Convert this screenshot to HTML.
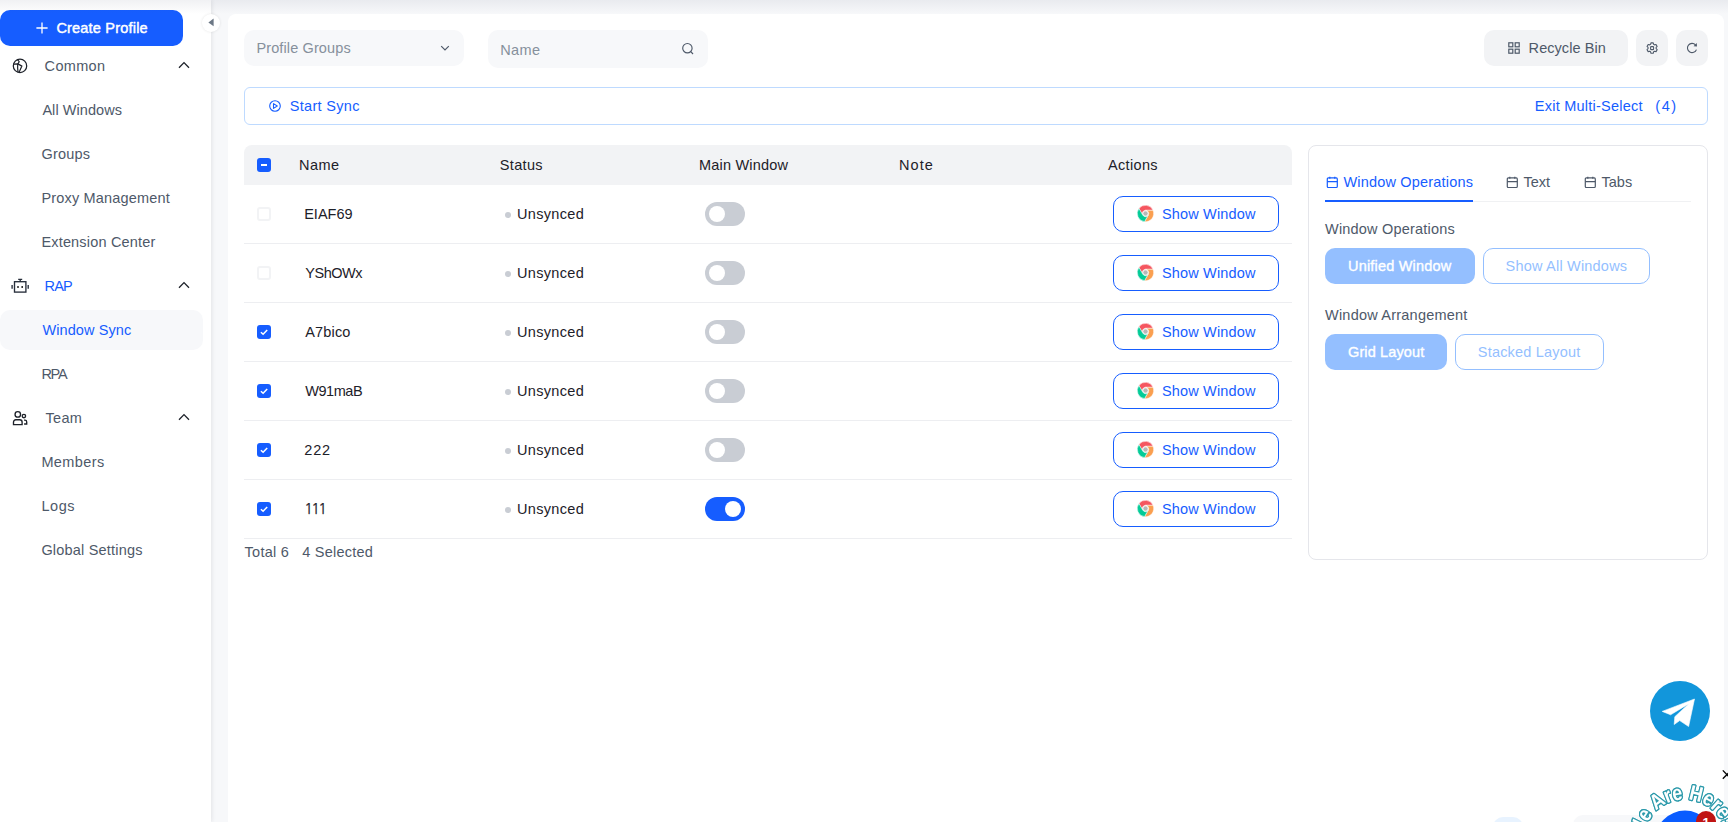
<!DOCTYPE html>
<html lang="en"><head><meta charset="utf-8"><title>Window Sync</title>
<style>
*{box-sizing:border-box;margin:0;padding:0}
html,body{width:1728px;height:822px;overflow:hidden;background:#f7f8fa}
body{position:relative;font-family:"Liberation Sans",sans-serif;font-size:14.5px;color:#1d2129}
.t{position:absolute;white-space:nowrap;line-height:20px;height:20px;display:block}
.ic{position:absolute;display:block;overflow:visible}
.abs{position:absolute;display:block}
aside{position:absolute;left:0;top:0;width:211px;height:822px;background:#fff;box-shadow:1px 0 4px rgba(20,20,30,.085)}
main{position:absolute;left:228px;top:14px;width:1496px;height:830px;background:#fff;border-radius:8px 8px 0 0}
.topshade{position:absolute;left:0;top:0;width:1728px;height:14px;background:linear-gradient(to bottom,rgba(60,70,100,.075),rgba(60,70,100,0));z-index:50;pointer-events:none}
.create{position:absolute;left:0;top:10px;width:183px;height:36px;border-radius:10px;background:#165dff}
.sel{position:absolute;left:0;top:310px;width:203px;height:40px;border-radius:10px;background:#f7f8fa}
.collapse{position:absolute;left:201.5px;top:13.8px;width:18px;height:18px;border-radius:50%;background:#fff;box-shadow:0 0 3px rgba(0,0,0,.10);z-index:5}
.field{position:absolute;background:#f7f8fa;border-radius:10px}
.gbtn{position:absolute;background:#f2f3f5;border-radius:10px}
.syncbar{position:absolute;left:244px;top:87px;width:1464px;height:38px;border:1px solid #bedaff;border-radius:6px;background:#fff}
.thead{position:absolute;left:244px;top:145px;width:1048px;height:40px;background:#f2f3f5;border-radius:8px 8px 0 0}
.rowline{position:absolute;left:244px;width:1048px;height:1px;background:#edeef1}
.cb{position:absolute;width:14px;height:14px;border-radius:3px;display:block}
.cb.off{border:2px solid #f2f3f5;background:#fff}
.cb.on{background:#165dff}
.cb svg{display:block}
.minus{position:absolute;left:4px;top:6px;width:6px;height:2px;background:#fff;display:block}
.dot{position:absolute;width:6px;height:6px;border-radius:50%;background:#c9cdd4}
.sw{position:absolute;width:40px;height:24px;border-radius:12px;background:#c9cdd4}
.sw b{position:absolute;left:4px;top:4px;width:16px;height:16px;border-radius:50%;background:#fff;display:block}
.sw.on{background:#165dff}.sw.on b{left:20px}
.obtn{position:absolute;border:1px solid #165dff;border-radius:10px;background:#fff}
.panel{position:absolute;left:1308px;top:145px;width:400px;height:415px;border:1px solid #e5e6eb;border-radius:8px;background:#fff}
.pbtn{position:absolute;border-radius:10px;background:#94bfff}
.pobtn{position:absolute;border-radius:10px;border:1px solid #94bfff;background:#fff}
</style></head><body>

<aside></aside>
<nav>
<div class="create"></div>
<svg class="ic" style="left:36px;top:22px" width="12" height="12" viewBox="0 0 12 12"><path d="M6 0.4v11.2M0.4 6h11.2" stroke="#fff" stroke-width="1.3" fill="none"/></svg>
<span class="t" id="t0" style="left:56.4px;top:18.0px;color:#fff;letter-spacing:0.20px;-webkit-text-stroke:0.45px #fff;">Create Profile</span>
<svg class="ic" style="left:12px;top:58px" width="16" height="16" viewBox="0 0 16 16" fill="none" stroke="#1d2129" stroke-width="1.25" stroke-linejoin="round" stroke-linecap="round"><circle cx="8" cy="7.9" r="6.7"/><g stroke-width="1.2"><path d="M5.5 1.7 L7.2 3.7 L5.9 5.9"/><path d="M1.6 6.1 L5.9 5.9 L9.9 8.1 L7.2 13.9"/><path d="M5.7 6.6 C5.5 9 5.7 11.5 6.0 14.0"/></g></svg>
<span class="t" id="t1" style="left:44.6px;top:56.0px;color:#4e5969;letter-spacing:0.31px;">Common</span>
<svg class="ic" style="left:177px;top:58.3px" width="14" height="14" viewBox="0 0 14 14"><path d="M2 9.8 L7 4.6 L12 9.8" fill="none" stroke="#1d2129" stroke-width="1.3" stroke-linecap="butt" stroke-linejoin="miter"/></svg>
<span class="t" id="t2" style="left:42.4px;top:100.0px;color:#4e5969;letter-spacing:0.06px;">All Windows</span>
<span class="t" id="t3" style="left:41.4px;top:144.0px;color:#4e5969;letter-spacing:0.21px;">Groups</span>
<span class="t" id="t4" style="left:41.4px;top:188.0px;color:#4e5969;letter-spacing:0.18px;">Proxy Management</span>
<span class="t" id="t5" style="left:41.4px;top:232.0px;color:#4e5969;letter-spacing:0.18px;">Extension Center</span>
<svg class="ic" style="left:11px;top:278px" width="18" height="16" viewBox="0 0 18 16" fill="none" stroke="#272e3b" stroke-width="1.35"><rect x="3.5" y="3.7" width="11.4" height="10.4"/><path d="M7.2 1.4h4M9.2 1.4v2.3M1.1 7v3.8M17.2 7v3.8"/><rect x="6.2" y="8.2" width="1.6" height="1.6" fill="#000" stroke="none"/><rect x="10.4" y="8.2" width="1.6" height="1.6" fill="#000" stroke="none"/></svg>
<span class="t" id="t6" style="left:44.6px;top:276.0px;color:#165dff;letter-spacing:-0.91px;">RAP</span>
<svg class="ic" style="left:177px;top:278.3px" width="14" height="14" viewBox="0 0 14 14"><path d="M2 9.8 L7 4.6 L12 9.8" fill="none" stroke="#1d2129" stroke-width="1.3" stroke-linecap="butt" stroke-linejoin="miter"/></svg>
<div class="sel"></div>
<span class="t" id="t7" style="left:42.4px;top:320.0px;color:#165dff;letter-spacing:0.10px;">Window Sync</span>
<span class="t" id="t8" style="left:41.4px;top:364.0px;color:#4e5969;letter-spacing:-1.27px;">RPA</span>
<svg class="ic" style="left:12px;top:410px" width="17" height="16" viewBox="0 0 17 16" fill="none" stroke="#1d2129" stroke-width="1.35"><circle cx="5.8" cy="4.4" r="2.75"/><circle cx="11.9" cy="6.0" r="1.7"/><path d="M1.5 14.6v-2.6a2.3 2.3 0 0 1 2.3-2.3h4a2.3 2.3 0 0 1 2.3 2.3v2.6z"/><path d="M12 10.1h0.9a1.8 1.8 0 0 1 1.8 1.8v2.1h-2.6"/></svg>
<span class="t" id="t9" style="left:45.6px;top:408.0px;color:#4e5969;letter-spacing:0.24px;">Team</span>
<svg class="ic" style="left:177px;top:410.3px" width="14" height="14" viewBox="0 0 14 14"><path d="M2 9.8 L7 4.6 L12 9.8" fill="none" stroke="#1d2129" stroke-width="1.3" stroke-linecap="butt" stroke-linejoin="miter"/></svg>
<span class="t" id="t10" style="left:41.4px;top:452.0px;color:#4e5969;letter-spacing:0.39px;">Members</span>
<span class="t" id="t11" style="left:41.4px;top:496.0px;color:#4e5969;letter-spacing:0.58px;">Logs</span>
<span class="t" id="t12" style="left:41.4px;top:540.0px;color:#4e5969;letter-spacing:0.20px;">Global Settings</span>
</nav>
<div class="collapse"><svg class="ic" style="left:6px;top:4.5px" width="6" height="9" viewBox="0 0 6 9"><path d="M0.4 4.4L5.6 0.6v7.6z" fill="#6b7785"/></svg></div>
<main></main>
<section>
<div class="field" style="left:244px;top:30px;width:220px;height:36px"></div>
<span class="t" id="t13" style="left:256.4px;top:38.0px;color:#86909c;letter-spacing:0.12px;">Profile Groups</span>
<svg class="ic" style="left:440px;top:43px" width="10" height="10" viewBox="0 0 10 10"><path d="M1.2 3.2L5 7.0L8.8 3.2" fill="none" stroke="#4e5969" stroke-width="1.2"/></svg>
<div class="field" style="left:488px;top:30px;width:220px;height:38px"></div>
<span class="t" id="t14" style="left:500.2px;top:39.5px;color:#86909c;letter-spacing:0.37px;">Name</span>
<svg class="ic" style="left:681px;top:42px" width="14" height="14" viewBox="0 0 14 14" fill="none" stroke="#4e5969" stroke-width="1.15"><circle cx="6.4" cy="6.2" r="4.7"/><path d="M9.8 9.6L12 12"/></svg>
<div class="gbtn" style="left:1484px;top:30px;width:144px;height:36px"></div>
<svg class="ic" style="left:1508px;top:42px" width="12" height="12" viewBox="0 0 12 12" fill="none" stroke="#4e5969" stroke-width="1.2"><rect x="0.8" y="0.8" width="4" height="4"/><rect x="7.2" y="0.8" width="4" height="4"/><rect x="0.8" y="7.2" width="4" height="4"/><rect x="7.2" y="7.2" width="4" height="4"/></svg>
<span class="t" id="t15" style="left:1528.6px;top:38.0px;color:#4e5969;letter-spacing:0.06px;">Recycle Bin</span>
<div class="gbtn" style="left:1636px;top:30px;width:32px;height:36px"></div>
<svg class="ic" style="left:1645.8px;top:41.9px" width="12.2" height="12.2" viewBox="0 0 13 13" fill="none" stroke="#4e5969" stroke-width="1.15" stroke-linejoin="round"><path d="M5.3 0.9h2.4l0.45 1.55 1.0 0.6 1.55-0.4 1.2 2.05-1.1 1.15v1.2l1.1 1.15-1.2 2.05-1.55-0.4-1.0 0.6-0.45 1.55h-2.4l-0.45-1.55-1.0-0.6-1.55 0.4-1.2-2.05 1.1-1.15v-1.2l-1.1-1.15 1.2-2.05 1.55 0.4 1.0-0.6z"/><rect x="4.9" y="4.9" width="3.2" height="3.2" rx="0.7"/></svg>
<div class="gbtn" style="left:1676px;top:30px;width:32px;height:36px"></div>
<svg class="ic" style="left:1686px;top:42px" width="12" height="12" viewBox="0 0 13 13" fill="none" stroke="#4e5969" stroke-width="1.2"><path d="M11.3 8.2A5 5 0 1 1 10.3 3.2"/><path d="M8.2 4.6L11.9 4.9L11.6 1.2z" fill="#4e5969" stroke="none"/></svg>
<div class="syncbar"></div>
<svg class="ic" style="left:269px;top:100px" width="12" height="12" viewBox="0 0 12 12" fill="none" stroke="#165dff" stroke-width="1.1" stroke-linejoin="round"><circle cx="6" cy="6" r="5.3"/><path d="M4.5 3.6L8.3 6L4.5 8.4z"/></svg>
<span class="t" id="t16" style="left:289.8px;top:96.0px;color:#165dff;letter-spacing:0.30px;">Start Sync</span>
<span class="t" id="t17" style="left:1534.8px;top:96.0px;color:#165dff;letter-spacing:0.24px;">Exit Multi-Select</span>
<span class="t" id="t18" style="left:1655.2px;top:96.0px;color:#165dff;letter-spacing:1.63px;">(4)</span>
<div class="thead"></div>
<i class="cb on" style="left:257px;top:158px"><b class="minus"></b></i>
<span class="t" id="t19" style="left:299.0px;top:155.0px;color:#1d2129;letter-spacing:0.50px;">Name</span>
<span class="t" id="t20" style="left:499.8px;top:155.0px;color:#1d2129;letter-spacing:0.34px;">Status</span>
<span class="t" id="t21" style="left:699.0px;top:155.0px;color:#1d2129;letter-spacing:0.20px;">Main Window</span>
<span class="t" id="t22" style="left:899.0px;top:155.0px;color:#1d2129;letter-spacing:1.05px;">Note</span>
<span class="t" id="t23" style="left:1108.0px;top:155.0px;color:#1d2129;letter-spacing:0.34px;">Actions</span>
<i class="cb off" style="left:257px;top:207px"></i>
<span class="t" id="t24" style="left:304.2px;top:204.0px;color:#1d2129;letter-spacing:0.01px;">EIAF69</span>
<i class="dot" style="left:504.7px;top:211.6px"></i>
<span class="t" id="t25" style="left:517.0px;top:204.0px;color:#1d2129;letter-spacing:0.33px;">Unsynced</span>
<i class="sw" style="left:705px;top:202px"><b></b></i>
<div class="obtn" style="left:1113px;top:196px;width:166px;height:36px"></div>
<svg class="ic" style="left:1136.9px;top:205.1px" width="17" height="17" viewBox="0 0 17 17"><path d="M8.50 5.30 L16.05 5.30 A8.2 8.2 0 0 0 1.95 3.56 L5.73 10.10 A3.2 3.2 0 0 1 8.50 5.30 Z" fill="#f5565f" stroke="#fff" stroke-width="0.5"/><path d="M11.27 10.10 L7.50 16.64 A8.2 8.2 0 0 0 16.05 5.30 L8.50 5.30 A3.2 3.2 0 0 1 11.27 10.10 Z" fill="#fa9f50" stroke="#fff" stroke-width="0.5"/><path d="M5.73 10.10 L1.95 3.56 A8.2 8.2 0 0 0 7.50 16.64 L11.27 10.10 A3.2 3.2 0 0 1 5.73 10.10 Z" fill="#03cb97" stroke="#fff" stroke-width="0.5"/><circle cx="8.5" cy="8.5" r="2.25" fill="#b7b7b7"/></svg>
<span class="t" id="t26" style="left:1162.0px;top:204.0px;color:#165dff;letter-spacing:0.15px;">Show Window</span>
<div class="rowline" style="top:243px"></div>
<i class="cb off" style="left:257px;top:266px"></i>
<span class="t" id="t27" style="left:305.2px;top:263.0px;color:#1d2129;letter-spacing:-0.45px;">YShOWx</span>
<i class="dot" style="left:504.7px;top:270.6px"></i>
<span class="t" id="t28" style="left:517.0px;top:263.0px;color:#1d2129;letter-spacing:0.33px;">Unsynced</span>
<i class="sw" style="left:705px;top:261px"><b></b></i>
<div class="obtn" style="left:1113px;top:255px;width:166px;height:36px"></div>
<svg class="ic" style="left:1136.9px;top:264.1px" width="17" height="17" viewBox="0 0 17 17"><path d="M8.50 5.30 L16.05 5.30 A8.2 8.2 0 0 0 1.95 3.56 L5.73 10.10 A3.2 3.2 0 0 1 8.50 5.30 Z" fill="#f5565f" stroke="#fff" stroke-width="0.5"/><path d="M11.27 10.10 L7.50 16.64 A8.2 8.2 0 0 0 16.05 5.30 L8.50 5.30 A3.2 3.2 0 0 1 11.27 10.10 Z" fill="#fa9f50" stroke="#fff" stroke-width="0.5"/><path d="M5.73 10.10 L1.95 3.56 A8.2 8.2 0 0 0 7.50 16.64 L11.27 10.10 A3.2 3.2 0 0 1 5.73 10.10 Z" fill="#03cb97" stroke="#fff" stroke-width="0.5"/><circle cx="8.5" cy="8.5" r="2.25" fill="#b7b7b7"/></svg>
<span class="t" id="t29" style="left:1162.0px;top:263.0px;color:#165dff;letter-spacing:0.15px;">Show Window</span>
<div class="rowline" style="top:302px"></div>
<i class="cb on" style="left:257px;top:325px"><svg width="14" height="14" viewBox="0 0 14 14"><path d="M3.9 7.2 L6.1 9.3 L10.2 4.9" fill="none" stroke="#fff" stroke-width="1.5"/></svg></i>
<span class="t" id="t30" style="left:305.2px;top:322.0px;color:#1d2129;letter-spacing:0.17px;">A7bico</span>
<i class="dot" style="left:504.7px;top:329.6px"></i>
<span class="t" id="t31" style="left:517.0px;top:322.0px;color:#1d2129;letter-spacing:0.33px;">Unsynced</span>
<i class="sw" style="left:705px;top:320px"><b></b></i>
<div class="obtn" style="left:1113px;top:314px;width:166px;height:36px"></div>
<svg class="ic" style="left:1136.9px;top:323.1px" width="17" height="17" viewBox="0 0 17 17"><path d="M8.50 5.30 L16.05 5.30 A8.2 8.2 0 0 0 1.95 3.56 L5.73 10.10 A3.2 3.2 0 0 1 8.50 5.30 Z" fill="#f5565f" stroke="#fff" stroke-width="0.5"/><path d="M11.27 10.10 L7.50 16.64 A8.2 8.2 0 0 0 16.05 5.30 L8.50 5.30 A3.2 3.2 0 0 1 11.27 10.10 Z" fill="#fa9f50" stroke="#fff" stroke-width="0.5"/><path d="M5.73 10.10 L1.95 3.56 A8.2 8.2 0 0 0 7.50 16.64 L11.27 10.10 A3.2 3.2 0 0 1 5.73 10.10 Z" fill="#03cb97" stroke="#fff" stroke-width="0.5"/><circle cx="8.5" cy="8.5" r="2.25" fill="#b7b7b7"/></svg>
<span class="t" id="t32" style="left:1162.0px;top:322.0px;color:#165dff;letter-spacing:0.15px;">Show Window</span>
<div class="rowline" style="top:361px"></div>
<i class="cb on" style="left:257px;top:384px"><svg width="14" height="14" viewBox="0 0 14 14"><path d="M3.9 7.2 L6.1 9.3 L10.2 4.9" fill="none" stroke="#fff" stroke-width="1.5"/></svg></i>
<span class="t" id="t33" style="left:305.2px;top:381.0px;color:#1d2129;letter-spacing:-0.45px;">W91maB</span>
<i class="dot" style="left:504.7px;top:388.6px"></i>
<span class="t" id="t34" style="left:517.0px;top:381.0px;color:#1d2129;letter-spacing:0.33px;">Unsynced</span>
<i class="sw" style="left:705px;top:379px"><b></b></i>
<div class="obtn" style="left:1113px;top:373px;width:166px;height:36px"></div>
<svg class="ic" style="left:1136.9px;top:382.1px" width="17" height="17" viewBox="0 0 17 17"><path d="M8.50 5.30 L16.05 5.30 A8.2 8.2 0 0 0 1.95 3.56 L5.73 10.10 A3.2 3.2 0 0 1 8.50 5.30 Z" fill="#f5565f" stroke="#fff" stroke-width="0.5"/><path d="M11.27 10.10 L7.50 16.64 A8.2 8.2 0 0 0 16.05 5.30 L8.50 5.30 A3.2 3.2 0 0 1 11.27 10.10 Z" fill="#fa9f50" stroke="#fff" stroke-width="0.5"/><path d="M5.73 10.10 L1.95 3.56 A8.2 8.2 0 0 0 7.50 16.64 L11.27 10.10 A3.2 3.2 0 0 1 5.73 10.10 Z" fill="#03cb97" stroke="#fff" stroke-width="0.5"/><circle cx="8.5" cy="8.5" r="2.25" fill="#b7b7b7"/></svg>
<span class="t" id="t35" style="left:1162.0px;top:381.0px;color:#165dff;letter-spacing:0.15px;">Show Window</span>
<div class="rowline" style="top:420px"></div>
<i class="cb on" style="left:257px;top:443px"><svg width="14" height="14" viewBox="0 0 14 14"><path d="M3.9 7.2 L6.1 9.3 L10.2 4.9" fill="none" stroke="#fff" stroke-width="1.5"/></svg></i>
<span class="t" id="t36" style="left:304.2px;top:440.0px;color:#1d2129;letter-spacing:0.90px;">222</span>
<i class="dot" style="left:504.7px;top:447.6px"></i>
<span class="t" id="t37" style="left:517.0px;top:440.0px;color:#1d2129;letter-spacing:0.33px;">Unsynced</span>
<i class="sw" style="left:705px;top:438px"><b></b></i>
<div class="obtn" style="left:1113px;top:432px;width:166px;height:36px"></div>
<svg class="ic" style="left:1136.9px;top:441.1px" width="17" height="17" viewBox="0 0 17 17"><path d="M8.50 5.30 L16.05 5.30 A8.2 8.2 0 0 0 1.95 3.56 L5.73 10.10 A3.2 3.2 0 0 1 8.50 5.30 Z" fill="#f5565f" stroke="#fff" stroke-width="0.5"/><path d="M11.27 10.10 L7.50 16.64 A8.2 8.2 0 0 0 16.05 5.30 L8.50 5.30 A3.2 3.2 0 0 1 11.27 10.10 Z" fill="#fa9f50" stroke="#fff" stroke-width="0.5"/><path d="M5.73 10.10 L1.95 3.56 A8.2 8.2 0 0 0 7.50 16.64 L11.27 10.10 A3.2 3.2 0 0 1 5.73 10.10 Z" fill="#03cb97" stroke="#fff" stroke-width="0.5"/><circle cx="8.5" cy="8.5" r="2.25" fill="#b7b7b7"/></svg>
<span class="t" id="t38" style="left:1162.0px;top:440.0px;color:#165dff;letter-spacing:0.15px;">Show Window</span>
<div class="rowline" style="top:479px"></div>
<i class="cb on" style="left:257px;top:502px"><svg width="14" height="14" viewBox="0 0 14 14"><path d="M3.9 7.2 L6.1 9.3 L10.2 4.9" fill="none" stroke="#fff" stroke-width="1.5"/></svg></i>
<span class="t" id="t39" style="left:304.2px;top:499.0px;color:#1d2129;letter-spacing:-1.79px;font-family:NanumGothic,'Liberation Sans',sans-serif;-webkit-text-stroke:0.25px #1d2129;">111</span>
<i class="dot" style="left:504.7px;top:506.6px"></i>
<span class="t" id="t40" style="left:517.0px;top:499.0px;color:#1d2129;letter-spacing:0.33px;">Unsynced</span>
<i class="sw on" style="left:705px;top:497px"><b></b></i>
<div class="obtn" style="left:1113px;top:491px;width:166px;height:36px"></div>
<svg class="ic" style="left:1136.9px;top:500.1px" width="17" height="17" viewBox="0 0 17 17"><path d="M8.50 5.30 L16.05 5.30 A8.2 8.2 0 0 0 1.95 3.56 L5.73 10.10 A3.2 3.2 0 0 1 8.50 5.30 Z" fill="#f5565f" stroke="#fff" stroke-width="0.5"/><path d="M11.27 10.10 L7.50 16.64 A8.2 8.2 0 0 0 16.05 5.30 L8.50 5.30 A3.2 3.2 0 0 1 11.27 10.10 Z" fill="#fa9f50" stroke="#fff" stroke-width="0.5"/><path d="M5.73 10.10 L1.95 3.56 A8.2 8.2 0 0 0 7.50 16.64 L11.27 10.10 A3.2 3.2 0 0 1 5.73 10.10 Z" fill="#03cb97" stroke="#fff" stroke-width="0.5"/><circle cx="8.5" cy="8.5" r="2.25" fill="#b7b7b7"/></svg>
<span class="t" id="t41" style="left:1162.0px;top:499.0px;color:#165dff;letter-spacing:0.15px;">Show Window</span>
<div class="rowline" style="top:538px"></div>
<span class="t" id="t42" style="left:244.6px;top:542.0px;color:#4e5969;letter-spacing:0.24px;">Total 6</span>
<span class="t" id="t43" style="left:302.2px;top:542.0px;color:#4e5969;letter-spacing:0.23px;">4 Selected</span>
<div class="panel"></div>
<div class="abs" style="left:1325px;top:201px;width:366px;height:1px;background:#f0f1f3"></div>
<div class="abs" style="left:1325px;top:200px;width:148px;height:2px;background:#165dff"></div>
<svg class="ic" style="left:1325.6px;top:175.6px" width="13" height="13" viewBox="0 0 13 13"><rect x="1.3" y="1.9" width="10" height="9.6" rx="1" fill="none" stroke="#165dff" stroke-width="1.2"/><path d="M1.3 5.6h10M3.8 0.8v2M8.8 0.8v2" fill="none" stroke="#165dff" stroke-width="1.2"/></svg>
<span class="t" id="t44" style="left:1343.4px;top:172.0px;color:#165dff;letter-spacing:0.19px;">Window Operations</span>
<svg class="ic" style="left:1505.6px;top:175.6px" width="13" height="13" viewBox="0 0 13 13"><rect x="1.3" y="1.9" width="10" height="9.6" rx="1" fill="none" stroke="#4e5969" stroke-width="1.2"/><path d="M1.3 5.6h10M3.8 0.8v2M8.8 0.8v2" fill="none" stroke="#4e5969" stroke-width="1.2"/></svg>
<span class="t" id="t45" style="left:1523.6px;top:172.0px;color:#4e5969;letter-spacing:-0.06px;">Text</span>
<svg class="ic" style="left:1584px;top:175.6px" width="13" height="13" viewBox="0 0 13 13"><rect x="1.3" y="1.9" width="10" height="9.6" rx="1" fill="none" stroke="#4e5969" stroke-width="1.2"/><path d="M1.3 5.6h10M3.8 0.8v2M8.8 0.8v2" fill="none" stroke="#4e5969" stroke-width="1.2"/></svg>
<span class="t" id="t46" style="left:1601.4px;top:172.0px;color:#4e5969;letter-spacing:0.05px;">Tabs</span>
<span class="t" id="t47" style="left:1325.0px;top:219.0px;color:#4e5969;letter-spacing:0.20px;">Window Operations</span>
<div class="pbtn" style="left:1325px;top:248px;width:150px;height:36px"></div>
<span class="t" id="t48" style="left:1348.0px;top:256.0px;color:#fff;letter-spacing:0.19px;-webkit-text-stroke:0.35px #fff;">Unified Window</span>
<div class="pobtn" style="left:1483px;top:248px;width:167px;height:36px"></div>
<span class="t" id="t49" style="left:1505.6px;top:256.0px;color:#94bfff;letter-spacing:0.20px;">Show All Windows</span>
<span class="t" id="t50" style="left:1325.0px;top:305.0px;color:#4e5969;letter-spacing:0.22px;">Window Arrangement</span>
<div class="pbtn" style="left:1325px;top:334px;width:122px;height:36px"></div>
<span class="t" id="t51" style="left:1348.0px;top:342.0px;color:#fff;letter-spacing:0.12px;-webkit-text-stroke:0.35px #fff;">Grid Layout</span>
<div class="pobtn" style="left:1455px;top:334px;width:149px;height:36px"></div>
<span class="t" id="t52" style="left:1477.8px;top:342.0px;color:#94bfff;letter-spacing:0.19px;">Stacked Layout</span>
<div class="abs" style="left:1492.8px;top:816.5px;width:30px;height:32px;border-radius:10px;background:#e8f3ff"></div>
<div class="abs" style="left:1572.5px;top:815px;width:135.5px;height:36px;border-radius:10px;background:#f7f8fa"></div>
</section>
<svg class="ic" style="left:1650px;top:680.8px" width="60" height="60" viewBox="0 0 60 60"><circle cx="30" cy="30" r="30" fill="#1296db"/><path d="M12.2 30.4 L44.5 18.0 L38.6 45.5 L29.7 39.6 L24.2 43.5 L24.8 35.7 L38.6 22.9 L20.6 33.8 Z" fill="#fff" stroke="#fff" stroke-width="0.6" stroke-linejoin="round"/></svg>
<svg class="ic" style="left:1608px;top:742px" width="120" height="80" viewBox="1608 742 120 80"><defs><path id="arc" d="M 1643.74 838.80 A 41.3 41.3 0 0 1 1723.43 825.46"/></defs><circle cx="1685" cy="840.6" r="30" fill="#0a5cff"/><circle cx="1706" cy="821" r="10" fill="#c01414"/><text x="1706" y="826.5" text-anchor="middle" font-family="Liberation Sans, sans-serif" font-weight="700" font-size="13" fill="#fff">1</text><text font-family="Liberation Sans, sans-serif" font-weight="700" font-size="21" fill="#fff" stroke="#2d9aab" stroke-width="2.6" paint-order="stroke" stroke-linejoin="round" style="filter:drop-shadow(0.8px 0.8px 0 #2d9aab)"><textPath href="#arc" textLength="112.4" lengthAdjust="spacingAndGlyphs">We Are Here!</textPath></text><path d="M1722.8 770.4 L1731 778.8 M1722.8 778.8 L1731 770.4" stroke="#000" stroke-width="1.3" fill="none"/></svg>
<div class="topshade"></div>
</body></html>
